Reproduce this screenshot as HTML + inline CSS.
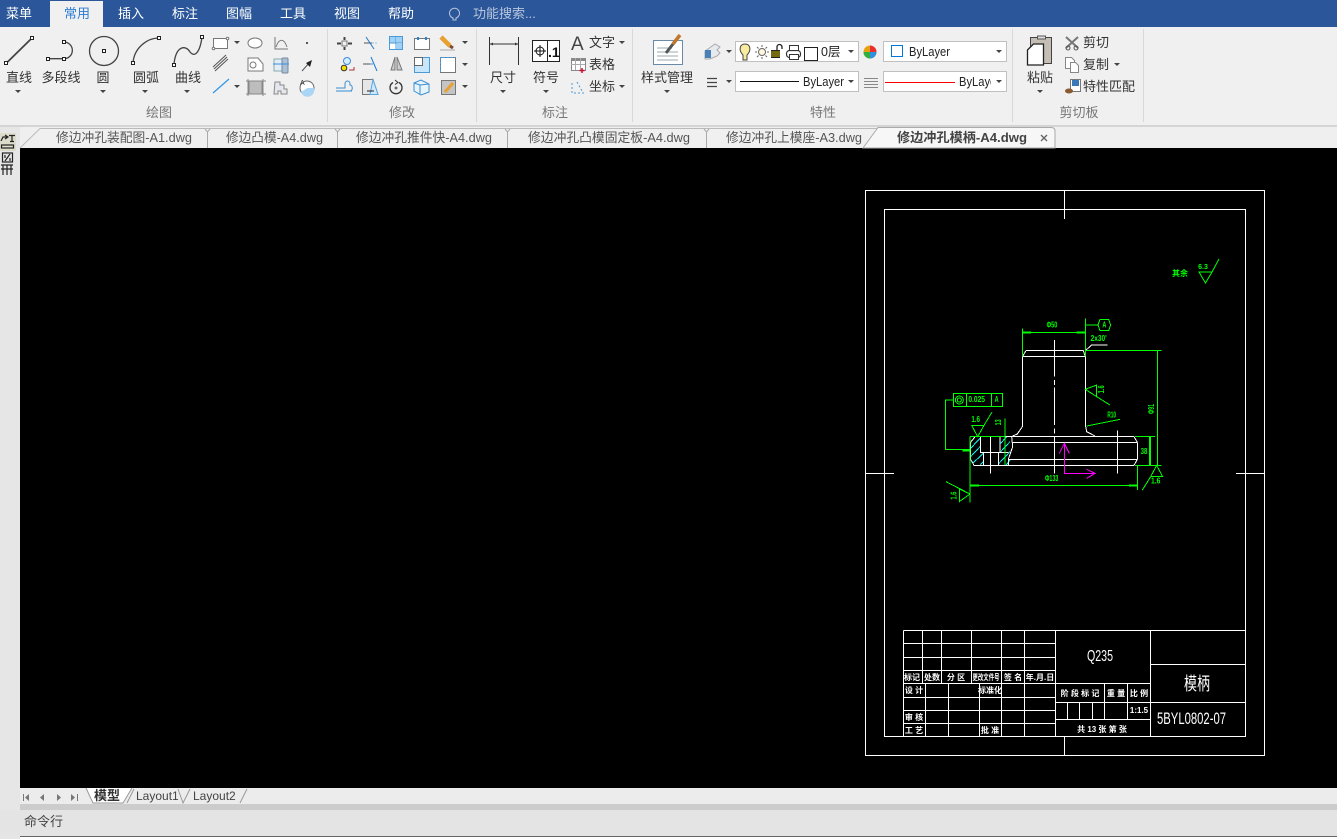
<!DOCTYPE html>
<html><head><meta charset="utf-8"><title>CAD</title>
<style>
html,body{margin:0;padding:0;background:#000;overflow:hidden}
svg{display:block;font-family:"Liberation Sans","Noto Sans CJK SC",sans-serif}
.m{fill:#fff;font-size:13px;text-anchor:middle}
.l{fill:#333;font-size:13px;text-anchor:middle}
.s{fill:#333;font-size:13px}
.g{fill:#777;font-size:13px;text-anchor:middle}
.tb{fill:#555;font-size:13px}
.d{fill:#0f0;font-size:24px;text-anchor:middle}
.w{fill:#fff;font-size:8px;text-anchor:middle;font-weight:bold}
</style></head><body>
<svg width="1337" height="839" viewBox="0 0 1337 839" xmlns="http://www.w3.org/2000/svg">
<defs><path id="ar" d="M0,0h6l-3,3z" fill="#444"/></defs>
<!-- backgrounds -->
<rect width="1337" height="839" fill="#e6e6e6"/>
<rect y="27" width="1337" height="99" fill="#f0f0f0"/>
<rect y="0" width="1337" height="27" fill="#2b579a"/>
<rect x="50" y="1" width="53" height="26" fill="#f0f0f0"/>
<rect y="125" width="1337" height="2" fill="#d4d4d4"/>
<rect y="127" width="1337" height="21" fill="#efefef"/>
<rect x="20" y="148" width="1317" height="640" fill="#000"/>
<rect x="0" y="127" width="20" height="712" fill="#e6e6e6"/>
<rect x="20" y="788" width="1317" height="16" fill="#ececec"/>
<rect x="20" y="804" width="1317" height="6" fill="#cccccc"/>
<rect x="0" y="810" width="1337" height="26" fill="#e4e4e4"/>
<rect x="20" y="836" width="1317" height="1" fill="#666"/>
<rect x="20" y="837" width="1317" height="2" fill="#fff"/>
<!-- menu -->
<text class="m" x="19" y="18">菜单</text>
<text x="77" y="18" font-size="13" fill="#2b7cd3" text-anchor="middle">常用</text>
<text class="m" x="131" y="18">插入</text>
<text class="m" x="185" y="18">标注</text>
<text class="m" x="239" y="18">图幅</text>
<text class="m" x="293" y="18">工具</text>
<text class="m" x="347" y="18">视图</text>
<text class="m" x="401" y="18">帮助</text>
<g fill="none" stroke="#b8c6dc" stroke-width="1"><path d="M453,18a5,5 0 1 1 3,0v2h-3z"/></g>
<text x="473" y="18" font-size="13" fill="#b9c6dd">功能搜索...</text>
<!-- separators -->
<g fill="#d8d8d8"><rect x="327" y="29" width="1" height="93"/><rect x="476" y="29" width="1" height="93"/><rect x="632" y="29" width="1" height="93"/><rect x="1012" y="29" width="1" height="93"/><rect x="1143" y="29" width="1" height="93"/></g>
<!-- draw big icons -->
<g fill="none" stroke="#444" stroke-width="1.3">
<path d="M6,63.500L32,38" stroke-width="1.800"/>
<path d="M48,58.700H64A8.300,8.300 0 0 0 64,42"/>
<circle cx="104" cy="51" r="14.500"/>
<path d="M133,63C134,48 147,38 159,38"/>
<path d="M174,64C176,45 186,45 190,52C195,58 200,52 202,37"/>
</g>
<g fill="#fff" stroke="#222"><rect x="4.500" y="61.500" width="3" height="3"/><rect x="30.500" y="36.500" width="3" height="3"/><rect x="46.500" y="57.500" width="3" height="3"/><rect x="62.500" y="57.500" width="3" height="3"/><rect x="62.500" y="40.500" width="3" height="3"/><rect x="102.500" y="49.500" width="3" height="3"/><rect x="131.500" y="61.500" width="3" height="3"/><rect x="157.500" y="36.500" width="3" height="3"/><rect x="172.500" y="63.500" width="3" height="3"/><rect x="200.500" y="35.500" width="3" height="3"/></g>
<text class="l" x="19" y="82">直线</text><text class="l" x="61" y="82">多段线</text><text class="l" x="103" y="82">圆</text><text class="l" x="146" y="82">圆弧</text><text class="l" x="188" y="82">曲线</text>
<use href="#ar" x="15" y="90"/><use href="#ar" x="100" y="90"/><use href="#ar" x="142" y="90"/><use href="#ar" x="184" y="90"/>
<text class="g" x="159" y="117">绘图</text>
<!-- draw small icons -->
<g fill="none" stroke="#777" stroke-width="1">
<rect x="213.500" y="38.500" width="14" height="10" fill="#fff"/>
<circle cx="213.500" cy="48.500" r="1.300" fill="#fff"/><circle cx="227.500" cy="38.500" r="1.300" fill="#fff"/>
<ellipse cx="255" cy="43" rx="7" ry="5" fill="#fff"/>
<path d="M275,37V49H288M276,47C279,38 284,38 287,47"/>
<path d="M248,58H258L263,64V71H248Z" fill="#fff"/><circle cx="253" cy="65" r="3"/>
<rect x="274" y="59" width="10" height="12" fill="#e2edf6" stroke="#8aa"/><rect x="282" y="58" width="6" height="15" rx="1" fill="#a9c0d6" stroke="#789"/><path d="M273,64H289" stroke="#3a8ee0"/>
<rect x="249" y="81" width="13" height="13" fill="#bdbdbd" stroke="#888"/><path d="M248,79V96M263,79V96M246,81H266M246,94H266" stroke="#888"/>
<path d="M275,82h5v3h4v4h3v5h-6v-3h-3v3h-4z" fill="#e4e8ee" stroke="#888"/>
<circle cx="307" cy="88" r="7" fill="#fff" stroke="#666"/><path d="M307.500,88H314A6.500,6.500 0 0 1 301,92L307.500,88Z" fill="#a9d6f5" stroke="none"/>
</g>
<text x="300" y="85" font-size="7" fill="#333">A</text>
<path d="M214,69L227,57M215,71L228,59M213,67L226,55" stroke="#555" fill="none"/>
<path d="M213,93L229,79" stroke="#2e96e8" stroke-width="1.200"/>
<use href="#ar" x="234" y="41"/><use href="#ar" x="234" y="85"/>
<rect x="306" y="42" width="2" height="2" fill="#555"/>
<path d="M302,71L310,62" stroke="#555"/><path d="M306,63L312,60L310,67Z" fill="#222"/>
<!-- modify icons -->
<g fill="none" stroke="#777" stroke-width="1">
<rect x="342" y="41" width="5" height="5"/><path d="M337,43.500H341M348,43.500H352M344.500,37V40M344.500,47V50" stroke="#444" stroke-width="2"/>
<path d="M364,43H372" stroke="#555"/><path d="M372,43H378" stroke="#8cc4ee" stroke-dasharray="2 1"/>
<path d="M366,37L374,49" stroke="#1f78d1"/>
<rect x="389.500" y="36.500" width="13" height="13" fill="#fff" stroke="#4a9ad8"/><rect x="390" y="37" width="6" height="6" fill="#9fd0f5" stroke="none"/><rect x="397" y="37" width="5" height="6" fill="#9fd0f5" stroke="none"/><rect x="397" y="44" width="5" height="5" fill="#9fd0f5" stroke="none"/><path d="M396,37V49M390,43H402" stroke="#4a9ad8"/>
<rect x="414.500" y="38.500" width="15" height="11" fill="#fff"/><path d="M418,37v3M426,37v3" stroke="#2b82d0" stroke-width="2"/>
<path d="M441,37L450,46" stroke="#e8a030" stroke-width="4.500"/><path d="M450,46l3,2" stroke="#7a4a30" stroke-width="3"/><path d="M440,50H455" stroke="#aaa"/>
<circle cx="347" cy="61" r="3.500" stroke="#3a8ee0" fill="#d8ecfb"/><circle cx="344" cy="68" r="2.800" fill="#f4e000" stroke="#333"/><path d="M349,70h5v-3" stroke="#a33"/>
<path d="M363,64H370" stroke="#555"/><path d="M370,64H373" stroke="#3a8ee0"/><path d="M371,57L377,71" stroke="#1f78d1"/>
<path d="M395,57L391,70H395ZM397,57L402,70H397Z" fill="#ccc"/>
<rect x="414.500" y="57.500" width="15" height="15" fill="#c8e6fb" stroke="#4a9ad8"/><rect x="414.500" y="57.500" width="8" height="8" fill="#fff" stroke="#666"/>
<rect x="440.500" y="57.500" width="15" height="15" fill="#fff"/><path d="M440.500,72V57.500H455" stroke="#4a9ad8" stroke-dasharray="3 1"/>
<path d="M336,91H352M336,88H345V84C345,80 350,80 350,84V85C353,85 353,91 350,91" stroke="#3a8ed0"/>
<path d="M362.500,79.500H373L378,94.500H362.500Z" fill="#e6e6e6"/><path d="M373,79.500L378,94.500H370Z" fill="#cde9fb" stroke="#5aa6e0"/><path d="M367,91H374" stroke="#222"/>
<path d="M393,82.500A6,6 0 1 0 399,82.500" stroke="#333" stroke-width="1.300"/><path d="M395,80l3,2.500l-3,2" stroke="#333"/><circle cx="396" cy="88" r="1" fill="#333"/>
<path d="M414,83L421,80L429,84V92L421,95L414,91Z" stroke="#3a8ed0" fill="#e8f4fc"/><path d="M420,85V95M414,83L420,85L429,84" stroke="#3a8ed0"/>
<rect x="441.500" y="80.500" width="14" height="14" fill="#c4c4c4" stroke="#777"/><path d="M445,92L453,83" stroke="#e8a030" stroke-width="3"/>
</g>
<use href="#ar" x="462" y="41"/><use href="#ar" x="462" y="63"/><use href="#ar" x="462" y="85"/>
<text class="g" x="402" y="117">修改</text>
<!-- dims -->
<g stroke="#333" fill="none"><path d="M489.500,37V65M518.500,37V65M490,44H518"/></g>
<path d="M490,44l3,-1.500v3zM518,44l-3,-1.500v3z" fill="#333"/>
<rect x="532.500" y="40.500" width="27" height="21" fill="#fff" stroke="#222"/><path d="M547.500,41V61" stroke="#222"/>
<circle cx="540" cy="51" r="4" fill="none" stroke="#111"/><path d="M534,51H546M540,45V57" stroke="#111"/>
<text x="548" y="57" font-size="14" font-weight="bold" fill="#111">.1</text>
<text class="l" x="503" y="82">尺寸</text><text class="l" x="546" y="82">符号</text>
<use href="#ar" x="500" y="90"/><use href="#ar" x="543" y="90"/>
<text x="571" y="50" font-size="19" fill="#444">A</text>
<text class="s" x="589" y="47">文字</text><text class="s" x="589" y="69">表格</text><text class="s" x="589" y="91">坐标</text>
<use href="#ar" x="619" y="41"/><use href="#ar" x="619" y="85"/>
<rect x="571.500" y="58.500" width="14" height="12" fill="#fff" stroke="#888"/><rect x="571" y="58" width="15" height="3" fill="#888"/><path d="M575.500,58v12M580.500,58v12M571,64.500h14" stroke="#aaa"/><path d="M582,68v5M579.500,70.500h5" stroke="#c8102e" stroke-width="1.500"/>
<path d="M572,83v10h12M577,82l5,9" stroke="#4a9ad8" stroke-dasharray="2 2" fill="none"/>
<text class="g" x="555" y="117">标注</text>
<!-- style -->
<rect x="653.500" y="40.500" width="29" height="24" fill="#fff" stroke="#6a8ba8"/><path d="M657,48H672M657,52H678M657,56H678M657,60H678" stroke="#99a8b5"/>
<path d="M666,53L673,44" stroke="#555" stroke-width="3"/><path d="M673,44L680,35" stroke="#c07830" stroke-width="3.500"/>
<text class="l" x="667" y="82">样式管理</text><use href="#ar" x="664" y="90"/>
<!-- properties -->
<path d="M708,49l7,-5l5,3l-3,3l3,3l-3,3l-7,3h-5v-8z" fill="#e6eaf0" stroke="#aaa"/><rect x="705" y="50" width="6" height="8" fill="#4a80b8"/>
<use href="#ar" x="726" y="50"/><use href="#ar" x="726" y="80"/>
<path d="M707,78.500H717M707,82.500H717M707,86.500H717" stroke="#444" stroke-width="1.200"/>
<g fill="#fff" stroke="#c0c0c0"><rect x="735.500" y="41.500" width="123" height="20"/><rect x="883.500" y="41.500" width="123" height="20"/><rect x="735.500" y="71.500" width="123" height="20"/><rect x="883.500" y="71.500" width="123" height="20"/></g>
<path d="M743,55C738,50 740,44 745,44C750,44 752,50 747,55V60H743Z" fill="#f9eca0" stroke="#444"/>
<circle cx="762" cy="52" r="3.500" fill="#fff8dc" stroke="#666"/><path d="M762,45v2M762,57v2M755,52h2M767,52h2M757,47l1.500,1.500M767,47l-1.500,1.500M757,57l1.500,-1.500M767,57l-1.500,-1.500" stroke="#666"/>
<rect x="771" y="50" width="9" height="8" fill="#222"/><path d="M771,52h9M771,54h9M771,56h9" stroke="#c9b200"/><path d="M777,50v-3a2.500,2.500 0 0 1 5,0v2" fill="none" stroke="#222" stroke-width="1.300"/>
<rect x="786.500" y="50.500" width="14" height="7" rx="3" fill="#fff" stroke="#333" stroke-width="1.200"/><rect x="789.500" y="45.500" width="9" height="5" fill="#fff" stroke="#333"/><rect x="789.500" y="54.500" width="9" height="5" fill="#fff" stroke="#333"/>
<rect x="804.500" y="47.500" width="13" height="13" fill="#fff" stroke="#222"/>
<text x="821" y="56" font-size="12.500" fill="#222">0层</text>
<use href="#ar" x="848" y="50"/><use href="#ar" x="996" y="50"/><use href="#ar" x="848" y="80"/><use href="#ar" x="996" y="80"/>
<circle cx="870" cy="52" r="6.500" fill="#e9a010"/><path d="M870,52V45.500A6.500,6.500 0 0 1 876.500,52Z" fill="#e83030"/><path d="M870,52H876.500A6.500,6.500 0 0 1 870,58.500Z" fill="#3090e0"/><path d="M870,52V58.500A6.500,6.500 0 0 1 863.500,52Z" fill="#30b040"/>
<rect x="891.500" y="45.500" width="11" height="11" fill="#fff" stroke="#0078d7"/>
<text x="909" y="56" font-size="12.500" fill="#222" textLength="41" lengthAdjust="spacingAndGlyphs">ByLayer</text>
<path d="M740,81.500H799" stroke="#111"/><text x="803" y="86" font-size="12.500" fill="#222" textLength="41" lengthAdjust="spacingAndGlyphs">ByLayer</text>
<path d="M864,78.500h14M864,81.500h14M864,84.500h14M864,87.500h14" stroke="#888"/>
<path d="M885,82.500H955" stroke="#f00"/>
<svg x="959" y="72" width="32" height="20"><text x="0" y="14" font-size="12.500" fill="#222" textLength="41" lengthAdjust="spacingAndGlyphs">ByLayer</text></svg>
<text class="g" x="823" y="117">特性</text>
<!-- clipboard -->
<rect x="1030.500" y="37.500" width="21" height="26" fill="#c4beb4" stroke="#444"/><rect x="1037.500" y="36" width="8" height="3" fill="#ddd" stroke="#555"/><path d="M1027.500,50l6,-6h10v21h-16z" fill="#fff" stroke="#222" stroke-width="1.300"/>
<text class="l" x="1040" y="82">粘贴</text><use href="#ar" x="1037" y="90"/>
<path d="M1066,37L1078,48M1078,37L1066,48" stroke="#777" stroke-width="2"/><circle cx="1068" cy="48" r="2" fill="none" stroke="#555"/><circle cx="1076" cy="48" r="2" fill="none" stroke="#555"/>
<path d="M1065.500,57.500h6l3,3v8h-9z" fill="#fff" stroke="#888"/><path d="M1070.500,62.500h5l3,3v7h-8z" fill="#fff" stroke="#888"/>
<rect x="1070.500" y="79.500" width="10" height="12" fill="#fff" stroke="#777"/><rect x="1072" y="80" width="7" height="6" fill="#3a78b8"/><ellipse cx="1069" cy="91" rx="4" ry="2.500" fill="#8a5a30"/>
<text class="s" x="1083" y="47">剪切</text><text class="s" x="1083" y="69">复制</text><text class="s" x="1083" y="91">特性匹配</text>
<use href="#ar" x="1114" y="63"/>
<text class="g" x="1079" y="117">剪切板</text>
<!-- doc tabs -->
<rect x="40" y="128" width="1015" height="20" fill="#f0f0f0"/>
<path d="M20,148L40,128.500H1052" fill="none" stroke="#bbb"/>
<g stroke="#aaa" fill="none"><path d="M207.500,132V148M205,129l2.500,3l2.500,-3M337.500,132V148M335,129l2.500,3l2.500,-3M507.500,132V148M505,129l2.500,3l2.500,-3M706.500,132V148M704,129l2.500,3l2.500,-3"/></g>
<path d="M863,148L878,127.500H1051Q1055,127.500 1055,131V148Z" fill="#f7f7f7" stroke="#aaa"/>
<text class="tb" x="56" y="142" textLength="136" lengthAdjust="spacingAndGlyphs">修边冲孔装配图-A1.dwg</text>
<text class="tb" x="226" y="142" textLength="97" lengthAdjust="spacingAndGlyphs">修边凸模-A4.dwg</text>
<text class="tb" x="356" y="142" textLength="136" lengthAdjust="spacingAndGlyphs">修边冲孔推件快-A4.dwg</text>
<text class="tb" x="528" y="142" textLength="162" lengthAdjust="spacingAndGlyphs">修边冲孔凸模固定板-A4.dwg</text>
<text class="tb" x="726" y="142" textLength="136" lengthAdjust="spacingAndGlyphs">修边冲孔上模座-A3.dwg</text>
<text x="897" y="142" font-size="13" font-weight="bold" fill="#444" textLength="130" lengthAdjust="spacingAndGlyphs">修边冲孔模柄-A4.dwg</text>
<path d="M1041,135l6,6M1047,135l-6,6" stroke="#666" stroke-width="1.400"/>
<!-- left strip -->
<rect x="0" y="133" width="16" height="18" fill="#dcdccc"/>
<g stroke="#222" fill="none" stroke-width="1.200"><path d="M1,141l2,-4h4M5,135l3,2l-3,2"/><path d="M9,135.500h6M12,135.500v6M10,141.500h4"/><rect x="1.500" y="145" width="12" height="3"/><rect x="2.500" y="153" width="10" height="9"/><path d="M5,161l5,-7M5,155v3M10,158v3"/><path d="M1,165h12M3,165v10M7,165v10M11,165v10M1,169h12"/></g>
<!-- bottom tabs -->
<g fill="#777"><path d="M23,794h1v7h-1zM29,794v7l-4,-3.500zM44,794v7l-4,-3.500zM57,794v7l4,-3.500zM71,794v7l4,-3.500zM77,794h1v7h-1z"/></g>
<path d="M86,788L93,803H123L132,788" fill="#fff" stroke="#999"/>
<path d="M127,803L134,789M178,789L183,803L190,789M240,803L247,789" fill="none" stroke="#999"/>
<text x="94" y="800" font-size="13" font-weight="bold" fill="#333">模型</text>
<text x="136" y="800" font-size="12" fill="#444">Layout1</text>
<text x="193" y="800" font-size="12" fill="#444">Layout2</text>
<text x="24" y="826" font-size="13" fill="#444">命令行</text>
<!-- drawing frame -->
<g fill="none" stroke="#fff" shape-rendering="crispEdges">
<rect x="865.500" y="190.500" width="399" height="565"/>
<rect x="884.500" y="209.500" width="361" height="527"/>
<path d="M1064.500,190V219M1064.500,736V755M865,473.500H894M1236,473.500H1264"/>
<!-- title block -->
<path d="M903.500,630.500H1245M903.500,630.500V736M1055.500,630.500V736M1150.500,630.500V736"/>
<path d="M903,643.500H1055M903,657.500H1055M903,670.500H1055M903,683.500H1150M903,697.500H1055M903,710.500H1055M903,723.500H1055"/>
<path d="M922.500,630V683M941.500,630V683M971.500,630V683M1001.500,630V736M1024.500,630V736"/>
<path d="M925.500,683V736M948.500,683V736M979.500,683V736"/>
<path d="M1055,702.500H1245M1055,719.500H1150M1150,664.500H1245"/>
<path d="M1104.500,683V719M1127.500,683V719M1067.500,702V719M1079.500,702V719M1092.500,702V719"/>
</g>
<g>
<text class="w" x="912" y="680">标记</text><text class="w" x="932" y="680">处数</text><text class="w" x="956" y="680">分 区</text><text class="w" x="986" y="680" textLength="27" lengthAdjust="spacingAndGlyphs">更改文件号</text><text class="w" x="1013" y="680">签 名</text><text class="w" x="1040" y="680">年.月.日</text>
<text class="w" x="914" y="693">设 计</text><text class="w" x="990" y="693">标准化</text><text class="w" x="914" y="720">审 核</text><text class="w" x="914" y="733">工 艺</text><text class="w" x="990" y="733">批 准</text>
<text class="w" x="1080" y="696">阶 段 标 记</text><text class="w" x="1116" y="696">重 量</text><text class="w" x="1139" y="696">比 例</text><text class="w" x="1139" y="713">1:1.5</text>
<text class="w" x="1102" y="732">共 13 张  第   张</text>
<text x="1100" y="661" fill="#fff" font-size="16" text-anchor="middle" textLength="26" lengthAdjust="spacingAndGlyphs">Q235</text>
<text x="1197" y="690" fill="#fff" font-size="18" text-anchor="middle" textLength="26" lengthAdjust="spacingAndGlyphs">模柄</text>
<text x="1157" y="724" fill="#fff" font-size="17" textLength="69" lengthAdjust="spacingAndGlyphs">5BYL0802-07</text>
</g>
<!-- roughness top right -->
<path d="M1199,272H1212L1205.500,283ZM1212,272L1219,259" fill="none" stroke="#0f0"/>
<text x="1203" y="269" fill="#0f0" font-size="7" font-weight="bold" text-anchor="middle">6.3</text>
<text x="1180" y="276" fill="#0f0" font-size="8" font-weight="bold" text-anchor="middle">其余</text>
<!-- part drawing -->
<g transform="translate(930,310) scale(.33333)" shape-rendering="crispEdges">
<g fill="none" stroke="#0ff" stroke-width="3">
<path d="M122,415L150,385M122,440L150,410M128,460L160,430M150,466L160,455M212,400L230,380M212,425L240,395M207,460L240,425M228,466L240,450"/>
</g>
<g fill="none" stroke="#fff" stroke-width="3">
<path d="M277,140V350L262,372L248,378M466,122V345L470,365L495,378"/>
<path d="M288,122H460M277,140H466M277,140L288,122M466,140L460,122"/>
<path d="M373,90V200M373,210V225M373,232V345M373,355V370M373,380V490"/>
<path d="M245,380H612M248,397H622M235,448H622M235,466H612M622,397V448M612,380L622,397M612,466L622,448"/>
<path d="M135,380L122,397V448L132,466H240M135,380H245L248,410L235,448V466"/>
<path d="M152,380V427H235M160,427V466M182,380V490M210,380V427M205,427V466M562,362V490"/>
<path d="M466,122L485,105H533"/>
</g>
<g fill="none" stroke="#0f0" stroke-width="3">
<path d="M277,55V140M277,68H466M466,25V140M466,45H505"/>
<path d="M277,68H303M440,68H466" stroke-width="6"/>
<path d="M466,122H695M683,122V466M615,466H695M615,380H675M660,380V466"/>
<path d="M660,380V466" stroke-width="6"/>
<path d="M510,28L536,28L542,45L536,62H510L504,45Z"/>
<path d="M466,238L500,225V260ZM500,260L540,285"/>
<path d="M470,348L570,328"/>
<rect x="70" y="250" width="148" height="40"/><path d="M109,250V290M185,250V290"/>
<circle cx="88" cy="270" r="12"/><circle cx="88" cy="270" r="6"/>
<path d="M70,270H46V418H120"/><path d="M97,421H120" stroke-width="6"/>
<path d="M125,346H162L143,380ZM162,346L186,306"/>
<path d="M225,325V465"/>
<path d="M120,380H225M120,380V578M120,527H622M622,466V540"/>
<path d="M120,527H147M597,527H622" stroke-width="6"/>
<path d="M48,515L120,552L88,537V575L120,552"/>
<path d="M680,466L662,500H698ZM662,500L637,540"/>
</g>
<g fill="none" stroke="#f0f" stroke-width="3">
<path d="M403,400V490H492M388,430L403,400L418,430M470,478L495,490L470,505"/>
</g>
<g font-weight="bold">
<text class="d" x="366" y="53" textLength="32" lengthAdjust="spacingAndGlyphs">Φ50</text>
<text class="d" x="523" y="53" textLength="12" lengthAdjust="spacingAndGlyphs">A</text>
<text class="d" x="506" y="93" textLength="48" lengthAdjust="spacingAndGlyphs">2x30'</text>
<text class="d" x="140" y="276" textLength="50" lengthAdjust="spacingAndGlyphs">0.025</text>
<text class="d" x="200" y="276" textLength="12" lengthAdjust="spacingAndGlyphs">A</text>
<text class="d" x="137" y="336" textLength="26" lengthAdjust="spacingAndGlyphs">1.6</text>
<text class="d" x="545" y="322" textLength="26" lengthAdjust="spacingAndGlyphs">R10</text>
<text class="d" x="642" y="432" textLength="20" lengthAdjust="spacingAndGlyphs">38</text>
<text class="d" x="365" y="513" textLength="40" lengthAdjust="spacingAndGlyphs">Φ133</text>
<text class="d" x="677" y="520" textLength="28" lengthAdjust="spacingAndGlyphs">1.6</text>
<text class="d" transform="translate(672,297) rotate(-90)" textLength="30" lengthAdjust="spacingAndGlyphs">Φ91</text>
<text class="d" transform="translate(522,238) rotate(-90)" textLength="24" lengthAdjust="spacingAndGlyphs">1.6</text>
<text class="d" transform="translate(213,337) rotate(-90)" textLength="18" lengthAdjust="spacingAndGlyphs">13</text>
<text class="d" transform="translate(79,557) rotate(-90)" textLength="24" lengthAdjust="spacingAndGlyphs">1.6</text>
</g>
</g>
</svg>
</body></html>
